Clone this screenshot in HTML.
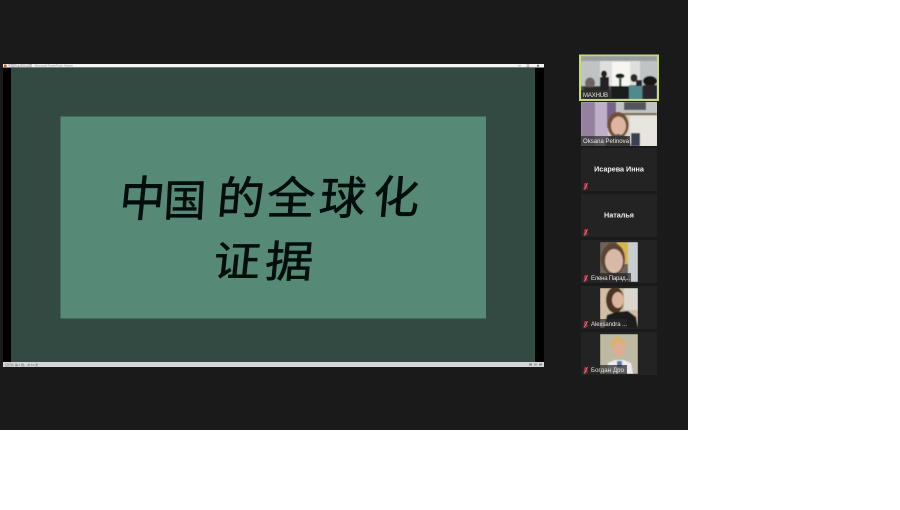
<!DOCTYPE html>
<html lang="zh">
<head>
<meta charset="utf-8">
<title>Meeting</title>
<style>
html,body{margin:0;padding:0;width:900px;height:510px;overflow:hidden;background:#fff}
svg{display:block}
.cal{font-family:"WenQuanYi Zen Hei","Noto Sans CJK SC",sans-serif;font-size:47px;fill:#060a08;stroke:#060a08;stroke-width:.7;font-weight:400}
.n{font-family:"Liberation Sans",sans-serif;font-size:6px;fill:#e6e6e6}
.c{font-family:"Liberation Sans",sans-serif;font-size:7.2px;fill:#f2f2f2;font-weight:700;text-anchor:middle}
.t{font-family:"Liberation Sans",sans-serif;font-size:3px;fill:#888}
</style>
</head>
<body>
<svg width="900" height="510" viewBox="0 0 900 510" xmlns="http://www.w3.org/2000/svg">
<defs>
<filter id="b"><feGaussianBlur stdDeviation="0.55"/></filter>
<filter id="b2"><feGaussianBlur stdDeviation="0.25"/></filter>
<clipPath id="c1"><rect x="581" y="56" width="76" height="43"/></clipPath>
<clipPath id="c2"><rect x="581" y="102" width="76" height="44"/></clipPath>
<clipPath id="c3"><rect x="600" y="242" width="38" height="40"/></clipPath>
<clipPath id="c4"><rect x="600" y="288" width="38" height="40"/></clipPath>
<clipPath id="c5"><rect x="600" y="334" width="38" height="40"/></clipPath>
<g id="mic"><rect x="584.200" y="183" width="3" height="5" rx="1.300" fill="#b8323c"/><path d="M583.500 187.500c.5 1.500 3.500 1.800 4.500 0M585.700 189v1.300" stroke="#b8323c" stroke-width=".7" fill="none"/><path d="M583.800 190l4-7" stroke="#d4d4d4" stroke-width=".45"/></g>
</defs>

<rect x="0" y="0" width="688" height="430" fill="#1a1a1a"/>

<!-- shared window -->
<rect x="3" y="64" width="541" height="303" fill="#000"/>
<rect x="3" y="64" width="541" height="3.500" fill="#f4f4f4"/>
<rect x="4" y="64.500" width="2.500" height="2.500" fill="#c8563a"/>
<text class="t" x="8" y="66.700">中国的全球化证据 - Microsoft PowerPoint Viewer</text>
<rect x="518" y="65.500" width="3" height=".7" fill="#999"/>
<rect x="527" y="64.800" width="2" height="2" fill="none" stroke="#888" stroke-width=".5"/>
<rect x="537" y="64.800" width="2" height="2" fill="#777"/>
<rect x="11" y="68" width="524" height="294" fill="#324a42"/>
<rect x="60.500" y="116.500" width="425.500" height="202" fill="#568a76"/>
<g filter="url(#b2)">
<text class="cal" transform="translate(118 216) skewX(-6) scale(.96 1.02)">中</text>
<text class="cal" transform="translate(163 216) skewX(-3) scale(.9 .92)">国</text>
<text class="cal" transform="translate(216 214) skewX(-5) scale(1 .95)">的</text>
<text class="cal" transform="translate(266 214) skewX(-4) scale(1.02 .95)">全</text>
<text class="cal" transform="translate(318 214) skewX(-6) scale(.98 .96)">球</text>
<text class="cal" transform="translate(372 213) skewX(-5) scale(.98 .95)">化</text>
<text class="cal" transform="translate(212 276) skewX(-6) scale(1 .88)">证</text>
<text class="cal" transform="translate(264 277) skewX(-5) scale(1.02 .92)">据</text>
</g>
<rect x="3" y="362" width="541" height="5" fill="#d4d6d8"/>
<text class="t" x="5" y="365.800" style="fill:#666">幻灯片 第 1 张，共 12 张</text>
<rect x="529" y="363.500" width="3" height="2" fill="#8a8f94"/>
<rect x="534" y="363.500" width="3" height="2" fill="#a4a8ac"/>
<rect x="539" y="363.500" width="3" height="2" fill="#8a8f94"/>

<!-- tile 1 -->
<rect x="579" y="54.500" width="80" height="46.500" fill="#c5dc70"/>
<rect x="581" y="56.500" width="76" height="42.500" fill="#b9bcbc"/>
<g clip-path="url(#c1)" filter="url(#b)">
<rect x="581" y="56" width="76" height="43" fill="#bfc3c3"/>
<rect x="581" y="56" width="76" height="5" fill="#9a9d9d"/>
<rect x="600" y="61" width="40" height="25" fill="#dfe0dd"/>
<rect x="612" y="62" width="18" height="24" fill="#f6f6f1"/>
<rect x="581" y="86" width="76" height="13" fill="#4a4744"/>
<rect x="611" y="86" width="24" height="13" fill="#1e1c1a"/>
<ellipse cx="590" cy="83" rx="5" ry="5.500" fill="#6a6462"/>
<rect x="584" y="87" width="20" height="12" fill="#2c2a2c"/>
<ellipse cx="604" cy="74" rx="3" ry="3.500" fill="#222"/>
<rect x="600" y="77" width="9" height="21" fill="#242428"/>
<ellipse cx="620" cy="76" rx="4.500" ry="2.500" fill="#1c1c1c"/>
<rect x="619" y="77" width="2.500" height="9" fill="#3a5a40"/>
<ellipse cx="634" cy="78" rx="3.500" ry="4" fill="#2d2a2a"/>
<rect x="629" y="85" width="13" height="14" fill="#4f8a8c"/>
<rect x="636" y="80" width="6" height="6" fill="#232226"/>
<ellipse cx="650" cy="81" rx="7" ry="5" fill="#171616"/>
<rect x="643" y="85" width="14" height="14" fill="#26282a"/>
</g>
<rect x="581" y="90" width="30" height="9" fill="#2d2d2d" fill-opacity=".75"/>
<text class="n" x="583" y="97" textLength="25">MAXHUB</text>

<!-- tile 2 -->
<g clip-path="url(#c2)">
<rect x="581" y="102" width="76" height="44" fill="#d5cfc9"/>
<g filter="url(#b)">
<rect x="581" y="102" width="14" height="44" fill="#93819f"/>
<rect x="595" y="102" width="13" height="44" fill="#bdb0c8"/>
<rect x="607" y="102" width="9" height="26" fill="#75648a"/>
<rect x="616" y="102" width="41" height="11" fill="#c2c3c4"/>
<rect x="624" y="102" width="22" height="8" fill="#54565b"/>
<rect x="616" y="113" width="41" height="2" fill="#7b6850"/>
<rect x="630" y="116" width="27" height="30" fill="#e8e5de"/>
<ellipse cx="618" cy="125" rx="10.500" ry="13" fill="#6f4f32"/>
<ellipse cx="618.500" cy="126" rx="7.500" ry="9.500" fill="#dcb6a0"/>
<path d="M605 146l3-9 10-3 10 3 3 9z" fill="#5a5250"/>
<rect x="631" y="133" width="9" height="13" fill="#3c4050"/>
</g>
</g>
<rect x="581" y="136" width="49" height="10" fill="#2d2d2d" fill-opacity=".72"/>
<text class="n" x="583" y="143" textLength="46">Oksana Petinova</text>

<!-- tile 3 -->
<rect x="581" y="148" width="76" height="43" fill="#232323"/>
<text class="c" x="619" y="171.500">Исарева Инна</text>
<use href="#mic"/>

<!-- tile 4 -->
<rect x="581" y="194" width="76" height="43" fill="#232323"/>
<text class="c" x="619" y="217.500">Наталья</text>
<use href="#mic" transform="translate(0,46)"/>

<!-- tile 5 -->
<rect x="581" y="240" width="76" height="43" fill="#232323"/>
<g clip-path="url(#c3)" filter="url(#b)">
<rect x="600" y="242" width="38" height="40" fill="#6d655c"/>
<rect x="617" y="242" width="11" height="22" fill="#d6b64c"/>
<rect x="628" y="242" width="10" height="40" fill="#c8cdd0"/>
<ellipse cx="613" cy="259" rx="12" ry="16" fill="#5c4434"/>
<ellipse cx="614" cy="261" rx="9" ry="12" fill="#d8b8a6"/>
<rect x="602" y="275" width="26" height="7" fill="#44363a"/>
</g>
<rect x="589" y="273" width="42" height="9" fill="#262626" fill-opacity=".7"/>
<text class="n" x="591" y="280" textLength="39">Елена Парад...</text>
<use href="#mic" transform="translate(0,92)"/>

<!-- tile 6 -->
<rect x="581" y="286" width="76" height="43" fill="#232323"/>
<g clip-path="url(#c4)" filter="url(#b)">
<rect x="600" y="288" width="38" height="40" fill="#d2bea6"/>
<rect x="624" y="288" width="14" height="22" fill="#dbd7ce"/>
<ellipse cx="615" cy="300" rx="9" ry="13" fill="#4a3424"/>
<ellipse cx="618" cy="300" rx="6" ry="8" fill="#ddb49c"/>
<path d="M604 328l3-13 9-3 12-1 8 6 2 11z" fill="#1e1a1a"/>
</g>
<rect x="589" y="319" width="38" height="9" fill="#262626" fill-opacity=".7"/>
<text class="n" x="591" y="326" textLength="36">Alexsandra ...</text>
<use href="#mic" transform="translate(0,138)"/>

<!-- tile 7 -->
<rect x="581" y="332" width="76" height="43" fill="#232323"/>
<g clip-path="url(#c5)" filter="url(#b)">
<rect x="600" y="334" width="38" height="40" fill="#bdb9a2"/>
<ellipse cx="618" cy="344" rx="7" ry="7" fill="#d9b268"/>
<ellipse cx="619" cy="349" rx="6" ry="7.500" fill="#dcae92"/>
<path d="M607 374l1-11 7-3h9l7 3 2 11z" fill="#ececee"/>
<rect x="617" y="361" width="5" height="6" fill="#5c78b0"/>
</g>
<rect x="589" y="365" width="38" height="9" fill="#262626" fill-opacity=".7"/>
<text class="n" x="591" y="372" textLength="33">Богдан Дро</text>
<use href="#mic" transform="translate(0,184)"/>
</svg>
</body>
</html>
